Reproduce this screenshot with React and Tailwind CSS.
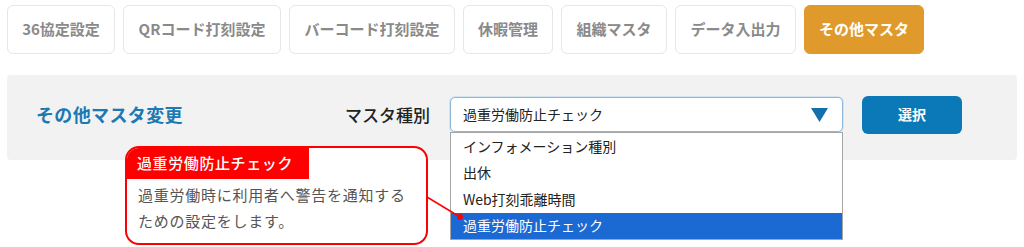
import { useState } from 'react'

const tabs = [
  { label: '36協定設定', w: 'w-[108px]' },
  { label: 'QRコード打刻設定', w: 'w-[158px]' },
  { label: 'バーコード打刻設定', w: 'w-[166px]' },
  { label: '休暇管理', w: 'w-[90px]' },
  { label: '組織マスタ', w: 'w-[106px]' },
  { label: 'データ入出力', w: 'w-[121px]' },
  { label: 'その他マスタ', w: 'w-[120px]' },
]

const options = ['インフォメーション種別', '出休', 'Web打刻乖離時間', '過重労働防止チェック']

export default function App() {
  const [active] = useState('その他マスタ')
  const [selected] = useState('過重労働防止チェック')

  return (
    <div className="relative w-[1024px] h-[247px] bg-white font-['Noto_Sans_CJK_JP','Noto_Sans',sans-serif] overflow-hidden">
      {/* Tabs */}
      <div className="flex gap-2 pt-[5px] pl-[7px]">
        {tabs.map(t => (
          <div
            key={t.label}
            className={
              t.label === active
                ? `${t.w} h-[49px] flex items-center justify-center rounded-md border border-[#e09a2b] bg-[#e09a2b] text-white text-[15px] font-bold`
                : `${t.w} h-[49px] flex items-center justify-center rounded-md border border-[#e6e6e6] bg-white text-[#8a8a8a] text-[15px] font-bold`
            }
          >
            {t.label}
          </div>
        ))}
      </div>

      {/* Panel */}
      <div className="mt-[21px] mx-[7px] h-[85px] rounded bg-[#f2f2f2] flex items-center pl-[29px] pb-[6px]">
        <h2 className="text-[18px] font-bold text-[#1b79b4] tracking-[0.02em]">その他マスタ変更</h2>
        <span className="ml-[162px] text-[17px] font-medium text-[#222]">マスタ種別</span>
        <div className="relative ml-[20px] w-[393px] h-[35px]">
          <div className="h-full rounded-[5px] border border-[#8db7d9] bg-white shadow-[0_0_0_1px_#d3e4f2] flex items-center pl-[12px] pr-[14px]">
            <span className="text-[14px] text-[#222]">{selected}</span>
            <svg className="ml-auto" width="17" height="14" viewBox="0 0 17 14">
              <polygon points="0,0 17,0 8.5,14" fill="#1470ab" />
            </svg>
          </div>
          {/* Open option list */}
          <div className="absolute left-0 top-[35px] w-[393px] border border-[#a5a5a5] bg-white z-10">
            {options.map(o => (
              <div
                key={o}
                className={
                  o === selected
                    ? 'h-[26.5px] flex items-center pl-[12px] text-[14px] bg-[#1b69d3] text-white'
                    : 'h-[26.5px] flex items-center pl-[12px] text-[14px] text-[#222]'
                }
              >
                {o}
              </div>
            ))}
          </div>
        </div>
        <button className="ml-[19px] w-[100px] h-[38px] rounded-md bg-[#0b79b7] text-white text-[14px] font-bold">
          選択
        </button>
      </div>

      {/* Callout */}
      <div className="absolute left-[125px] top-[146px] w-[303px] h-[99px] rounded-[14px] border-2 border-[#ff0000] bg-white overflow-hidden z-20">
        <div className="w-[182px] h-[31px] bg-[#ff0000] text-white text-[15px] font-medium tracking-[0.04em] flex items-center pl-[10px]">
          過重労働防止チェック
        </div>
        <p className="px-[11px] pt-[3px] text-[15px] leading-[26px] tracking-[0.05em] text-[#555]">
          過重労働時に利用者へ警告を通知する
          <br />
          ための設定をします。
        </p>
      </div>
      <svg className="absolute left-0 top-0 z-30 pointer-events-none" width="1024" height="247">
        <line x1="427" y1="197" x2="460" y2="217" stroke="#ff0000" strokeWidth="1.5" />
        <circle cx="460" cy="217" r="3" fill="#ff0000" />
      </svg>
    </div>
  )
}
